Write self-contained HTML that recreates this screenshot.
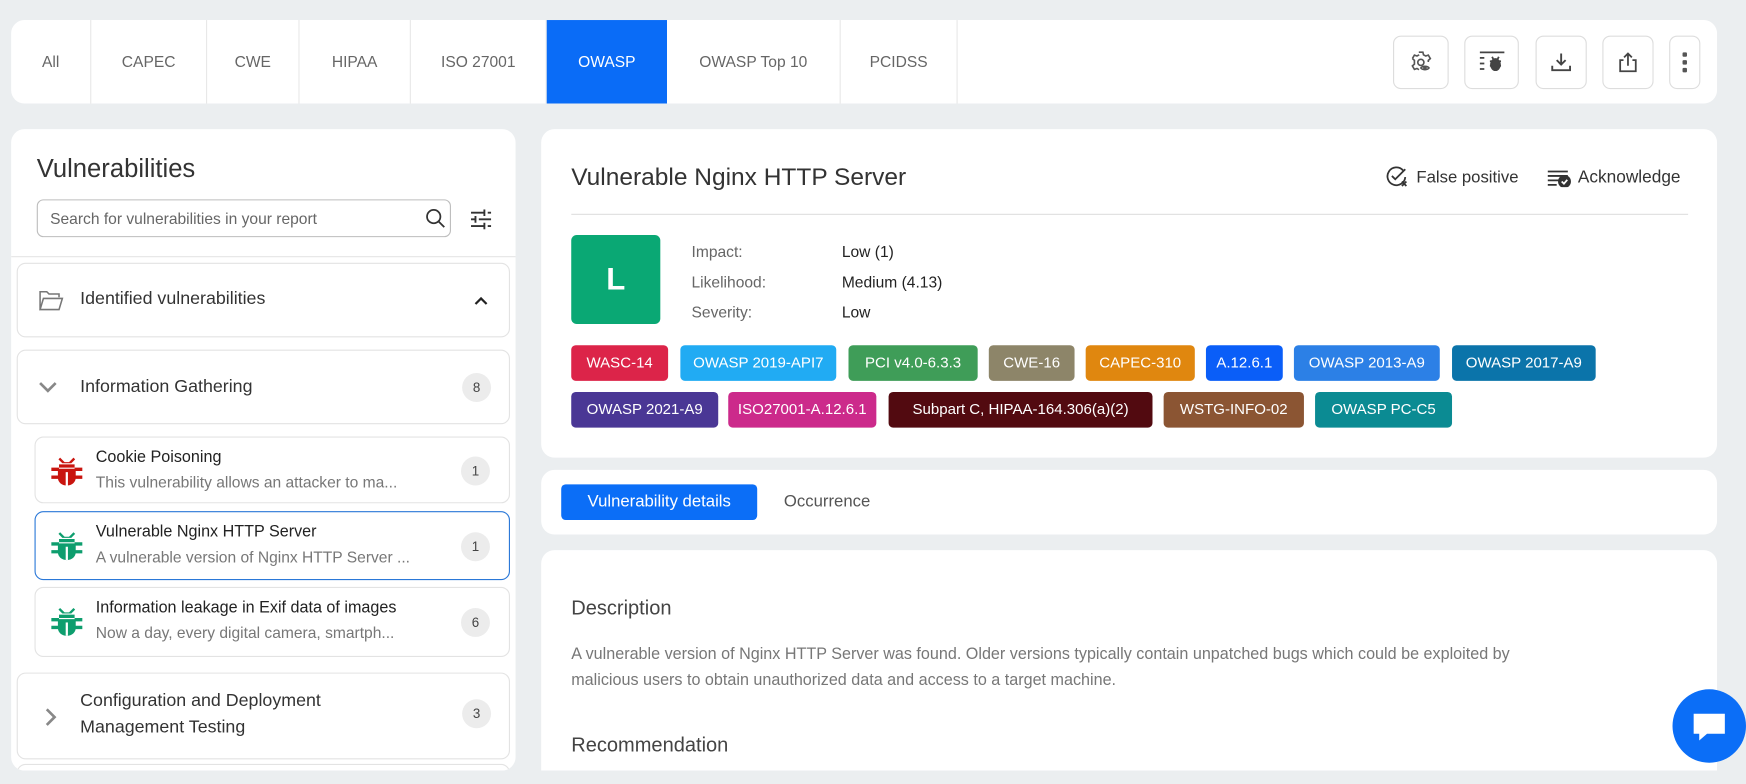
<!DOCTYPE html>
<html><head><meta charset="utf-8"><style>
*{box-sizing:border-box;margin:0;padding:0}
html,body{width:1746px;height:784px;overflow:hidden;background:#ebeef0}
body{font-family:"Liberation Sans",sans-serif;color:#333}
#w{position:absolute;left:0;top:0;width:1568px;height:704px;overflow:hidden;transform:scale(1.11352);transform-origin:0 0}
.a{position:absolute}
.card{position:absolute;background:#fff;border-radius:12px}
.tab{position:absolute;top:0;height:75px;line-height:75px;font-size:14px;color:#666;text-align:center;border-right:1px solid #e8e8e8}
.ib{position:absolute;top:14px;height:48px;border:1px solid #ddd;border-radius:7px;display:flex;align-items:center;justify-content:center}
.sub{position:absolute;left:15px;width:443px;border:1px solid #e3e3e3;border-radius:8px;background:#fff}
.item{position:absolute;left:31px;width:427px;border:1px solid #e3e3e3;border-radius:8px;background:#fff}
.badge{position:absolute;width:26px;height:26px;border-radius:50%;background:#ececec;font-size:12px;color:#444;text-align:center;line-height:26px}
.it1{position:absolute;left:54px;top:10px;font-size:14.5px;color:#222;white-space:nowrap}
.it2{position:absolute;left:54px;top:32px;font-size:14px;color:#777;white-space:nowrap}
.bug{position:absolute;left:14px;top:16px}
.tag{position:absolute;height:32px;line-height:32px;border-radius:4px;color:#fff;font-size:13.5px;text-align:center;white-space:nowrap}
</style></head><body><div id="w">

<div class="card" style="left:10px;top:18px;width:1532px;height:75px;overflow:hidden">
<div class="tab" style="left:0;width:72px">All</div>
<div class="tab" style="left:72px;width:104px">CAPEC</div>
<div class="tab" style="left:176px;width:83px">CWE</div>
<div class="tab" style="left:259px;width:100px">HIPAA</div>
<div class="tab" style="left:359px;width:122px">ISO 27001</div>
<div class="tab" style="left:481px;width:108px;background:#0a6cf7;color:#fff;border:none">OWASP</div>
<div class="tab" style="left:589px;width:156px">OWASP Top 10</div>
<div class="tab" style="left:745px;width:105px">PCIDSS</div>
<div class="ib" style="left:1241px;width:50px"><svg width="22" height="22" viewBox="0 0 24 24" fill="none" stroke="#555" stroke-width="1.6"><path d="M10 2h4l.6 2.6 2.2 1.2 2.5-.9 2 3.4-2 1.8v1.5M3.7 8.3l2-3.4 2.5.9 2.2-1.2M3.7 8.3l2 1.8v3.6l-2 1.8 2 3.4 2.5-.9 2 1.2"/><circle cx="12" cy="12" r="3"/><path d="M12 17.5c1.5-2.2 6.5-2.2 8 0-1.5 2.2-6.5 2.2-8 0z"/><circle cx="16" cy="17.5" r="1" fill="#555"/></svg></div>
<div class="ib" style="left:1305px;width:49px"><svg width="24" height="22" viewBox="0 0 24 22" fill="none" stroke="#444" stroke-width="1.6"><path d="M1 2h22M1 7h4M1 12h4M1 17h4"/><ellipse cx="15" cy="13" rx="4" ry="5" fill="#444"/><path d="M15 8v10M10 10h2M18 10h2M10 14h2M18 14h2M12 6l1 2M18 6l-1 2"/></svg></div>
<div class="ib" style="left:1369px;width:46px"><svg width="20" height="20" viewBox="0 0 20 20" fill="none" stroke="#444" stroke-width="1.7"><path d="M10 2v10M6 8l4 4 4-4M2 13v4h16v-4"/></svg></div>
<div class="ib" style="left:1429px;width:46px"><svg width="18" height="20" viewBox="0 0 18 20" fill="none" stroke="#444" stroke-width="1.6"><path d="M9 13V2M5.5 5.5L9 2l3.5 3.5M5 8H2v10h14V8h-3"/></svg></div>
<div class="ib" style="left:1489px;width:28px"><svg width="6" height="20" viewBox="0 0 6 20" fill="#555"><rect x="1" y="1" width="4" height="4" rx="1"/><rect x="1" y="8" width="4" height="4" rx="1"/><rect x="1" y="15" width="4" height="4" rx="1"/></svg></div>
</div>

<div class="card" style="left:10px;top:116px;width:453px;height:576px;overflow:hidden">
<div class="a" style="left:23px;top:22px;font-size:23px;color:#333">Vulnerabilities</div>
<div class="a" style="left:23px;top:63px;width:372px;height:34px;border:1px solid #bdbdbd;border-radius:6px">
<div class="a" style="left:11px;top:8px;font-size:14px;color:#666">Search for vulnerabilities in your report</div>
<svg class="a" style="left:348px;top:7px" width="18" height="18" viewBox="0 0 18 18" fill="none" stroke="#333" stroke-width="1.6"><circle cx="7.5" cy="7.5" r="6"/><path d="M12 12l5 5"/></svg></div>
<svg class="a" style="left:412px;top:72px" width="20" height="18" viewBox="0 0 20 18" fill="none" stroke="#333" stroke-width="1.7"><path d="M1 3h12M16 3h3M13 0v6M1 9h4M8 9h11M5 6v6M1 15h12M16 15h3M13 12v6"/></svg>
<div class="a" style="left:0;top:114px;width:453px;height:1px;background:#e5e5e5"></div>
<div class="sub" style="left:5px;top:570px;height:40px"></div>
</div>

<div class="sub" style="top:236px;height:67px">
<svg class="a" style="left:19px;top:24px" width="22" height="18" viewBox="0 0 22 18" fill="none" stroke="#777" stroke-width="1.4"><path d="M1 17V1h6l2 2h9v3M1 17l3-10h17l-3 10z"/></svg>
<div class="a" style="left:56px;top:23px;font-size:16px;color:#333">Identified vulnerabilities</div>
<svg class="a" style="left:409px;top:28px" width="14" height="10" viewBox="0 0 14 10" fill="none" stroke="#222" stroke-width="2"><path d="M2 8l5-5 5 5"/></svg>
</div>
<div class="sub" style="top:314px;height:67px">
<svg class="a" style="left:18px;top:27px" width="18" height="12" viewBox="0 0 18 12" fill="none" stroke="#888" stroke-width="2.4"><path d="M2 2l7 7 7-7"/></svg>
<div class="a" style="left:56px;top:24px;font-size:16px;color:#333">Information Gathering</div>
<div class="badge" style="left:399px;top:20px">8</div>
</div>

<div class="item" style="top:392px;height:60px">
<svg class="bug" width="28" height="28" viewBox="0 0 28 28" fill="#c9150f"><path d="M8 2l4 4h4l4-4 1.5 1.5-3.5 3.5h-8L6.5 3.5zM7 8h14v3H7z"/><path d="M6 12h16v8c0 4-3.5 7-8 7s-8-3-8-7z"/><path d="M0 11h7v3H0zM21 11h7v3h-7zM0 18h7v3H0zM21 18h7v3h-7z"/><rect x="13" y="15" width="2" height="12" fill="#fff"/></svg>
<div class="it1">Cookie Poisoning</div><div class="it2">This vulnerability allows an attacker to ma...</div>
<div class="badge" style="left:382px;top:17px">1</div></div>
<div class="item" style="top:459px;height:62px;border-color:#2a78d8">
<svg class="bug" width="28" height="28" viewBox="0 0 28 28" fill="#0e9e6e"><path d="M8 2l4 4h4l4-4 1.5 1.5-3.5 3.5h-8L6.5 3.5zM7 8h14v3H7z"/><path d="M6 12h16v8c0 4-3.5 7-8 7s-8-3-8-7z"/><path d="M0 11h7v3H0zM21 11h7v3h-7zM0 18h7v3H0zM21 18h7v3h-7z"/><rect x="13" y="15" width="2" height="12" fill="#fff"/></svg>
<div class="it1">Vulnerable Nginx HTTP Server</div><div class="it2">A vulnerable version of Nginx HTTP Server ...</div>
<div class="badge" style="left:382px;top:18px">1</div></div>
<div class="item" style="top:527px;height:63px">
<svg class="bug" width="28" height="28" viewBox="0 0 28 28" fill="#0e9e6e"><path d="M8 2l4 4h4l4-4 1.5 1.5-3.5 3.5h-8L6.5 3.5zM7 8h14v3H7z"/><path d="M6 12h16v8c0 4-3.5 7-8 7s-8-3-8-7z"/><path d="M0 11h7v3H0zM21 11h7v3h-7zM0 18h7v3H0zM21 18h7v3h-7z"/><rect x="13" y="15" width="2" height="12" fill="#fff"/></svg>
<div class="it1">Information leakage in Exif data of images</div><div class="it2">Now a day, every digital camera, smartph...</div>
<div class="badge" style="left:382px;top:18px">6</div></div>

<div class="sub" style="top:604px;height:78px">
<svg class="a" style="left:24px;top:30px" width="12" height="18" viewBox="0 0 12 18" fill="none" stroke="#888" stroke-width="2.4"><path d="M2 2l7 7-7 7"/></svg>
<div class="a" style="left:56px;top:13px;font-size:16px;color:#333;line-height:24px">Configuration and Deployment<br>Management Testing</div>
<div class="badge" style="left:399px;top:23px">3</div>
</div>

<div class="card" style="left:486px;top:116px;width:1056px;height:295px">
<div class="a" style="left:27px;top:30px;font-size:22px;color:#333">Vulnerable Nginx HTTP Server</div>
<svg class="a" style="left:758px;top:33px" width="22" height="20" viewBox="0 0 22 20" fill="none" stroke="#333" stroke-width="1.6"><path d="M16 4a8 8 0 1 0 2 6"/><path d="M6 9l3 3 9-9M15 14l4 4M19 14l-4 4"/></svg>
<div class="a" style="left:786px;top:35px;font-size:15px;color:#333">False positive</div>
<svg class="a" style="left:903px;top:36px" width="22" height="16" viewBox="0 0 22 16" fill="none" stroke="#333" stroke-width="1.6"><path d="M1 2h18M1 6h18M1 10h10M1 14h8"/><circle cx="16" cy="11" r="5" fill="#333"/><path d="M13.5 11l2 2 3-3.5" stroke="#fff"/></svg>
<div class="a" style="left:931px;top:35px;font-size:15.5px;color:#333">Acknowledge</div>
<div class="a" style="left:27px;top:76px;width:1003px;height:1px;background:#e0e0e0"></div>
<div class="a" style="left:27px;top:95px;width:80px;height:80px;background:#0aa874;border-radius:5px;color:#fff;font-size:28px;font-weight:bold;text-align:center;line-height:80px">L</div>
<div class="a" style="left:135px;top:97px;font-size:14px;color:#666;line-height:27px">Impact:<br>Likelihood:<br>Severity:</div>
<div class="a" style="left:270px;top:97px;font-size:14px;color:#222;line-height:27px">Low (1)<br>Medium (4.13)<br>Low</div>
<div class="tag" style="left:27px;top:194px;width:87px;background:#dc2449">WASC-14</div>
<div class="tag" style="left:125px;top:194px;width:140px;background:#21abf3">OWASP 2019-API7</div>
<div class="tag" style="left:276px;top:194px;width:116px;background:#3f9d58">PCI v4.0-6.3.3</div>
<div class="tag" style="left:402px;top:194px;width:77px;background:#8d8569">CWE-16</div>
<div class="tag" style="left:489px;top:194px;width:98px;background:#e0870f">CAPEC-310</div>
<div class="tag" style="left:597px;top:194px;width:69px;background:#0a5ef8">A.12.6.1</div>
<div class="tag" style="left:676px;top:194px;width:131px;background:#2c80e6">OWASP 2013-A9</div>
<div class="tag" style="left:818px;top:194px;width:129px;background:#0b74aa">OWASP 2017-A9</div>
<div class="tag" style="left:27px;top:236px;width:132px;background:#4a3795">OWASP 2021-A9</div>
<div class="tag" style="left:168px;top:236px;width:133px;background:#cc2a8b">ISO27001-A.12.6.1</div>
<div class="tag" style="left:312px;top:236px;width:237px;background:#520a10">Subpart C, HIPAA-164.306(a)(2)</div>
<div class="tag" style="left:559px;top:236px;width:126px;background:#8b5533">WSTG-INFO-02</div>
<div class="tag" style="left:695px;top:236px;width:123px;background:#0b8b93">OWASP PC-C5</div>
</div>

<div class="card" style="left:486px;top:422px;width:1056px;height:58px">
<div class="a" style="left:18px;top:13px;width:176px;height:32px;background:#0b6ef7;border-radius:4px;color:#fff;font-size:15px;text-align:center;line-height:32px">Vulnerability details</div>
<div class="a" style="left:218px;top:20px;font-size:15px;color:#555">Occurrence</div>
</div>

<div class="card" style="left:486px;top:494px;width:1056px;height:198px;border-radius:12px 12px 0 0">
<div class="a" style="left:27px;top:42px;font-size:18px;color:#444">Description</div>
<div class="a" style="left:27px;top:83px;font-size:14.5px;color:#777;line-height:23px">A vulnerable version of Nginx HTTP Server was found. Older versions typically contain unpatched bugs which could be exploited by<br>malicious users to obtain unauthorized data and access to a target machine.</div>
<div class="a" style="left:27px;top:165px;font-size:18px;color:#444">Recommendation</div>
</div>

<div class="a" style="left:1502px;top:619px;width:66px;height:66px;border-radius:50%;background:#0b6ef7">
<svg class="a" style="left:17px;top:20px" width="32" height="28" viewBox="0 0 32 28" fill="#fff"><path d="M2 2h28v18H14l-7 6v-6H2z"/></svg></div>
</div></body></html>
